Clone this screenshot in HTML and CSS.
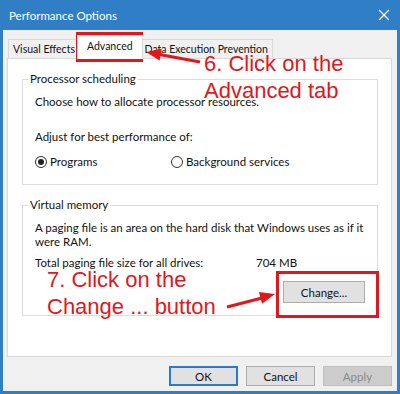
FILE: index.html
```html
<!DOCTYPE html>
<html lang="en">
<head>
    <meta charset="UTF-8">
    <title>Performance Options</title>
    <link rel="stylesheet" href="styles.css">
</head>
<body>
    <div class="window">
        <div class="titlebar">
            <span class="title">Performance Options</span>
            <svg class="close" width="12" height="12" viewBox="0 0 12 12">
                <path d="M1 1 L11 11 M11 1 L1 11" stroke="#fff" stroke-width="1.3" fill="none"/>
            </svg>
        </div>

        <div class="frame">
            <div class="tabs">
                <div class="tab">Visual Effects</div>
                <div class="tab selected">Advanced</div>
                <div class="tab">Data Execution Prevention</div>
            </div>

            <div class="panel">
                <fieldset class="group">
                    <legend>Processor scheduling</legend>
                    <p class="line">Choose how to allocate processor resources.</p>
                    <p class="line adjust">Adjust for best performance of:</p>
                    <div class="options">
                        <label class="option"><span class="radio checked"></span>Programs</label>
                        <label class="option"><span class="radio"></span>Background services</label>
                    </div>
                </fieldset>

                <fieldset class="group vm">
                    <legend>Virtual memory</legend>
                    <p class="para">A paging file is an area on the hard disk that Windows uses as if it were RAM.</p>
                    <div class="total">
                        <span class="total-label">Total paging file size for all drives:</span>
                        <span>704 MB</span>
                    </div>
                    <div class="change-row">
                        <button class="btn change">Change...</button>
                    </div>
                </fieldset>
            </div>

            <div class="footer">
                <button class="btn default">OK</button>
                <button class="btn">Cancel</button>
                <button class="btn disabled">Apply</button>
            </div>
        </div>

        <!-- tutorial annotations drawn over the dialog -->
        <div class="mark mark-tab"></div>
        <div class="mark mark-change"></div>
        <div class="note note-6">6. Click on the<br>Advanced tab</div>
        <div class="note note-7">7. Click on the<br>Change ... button</div>
        <svg class="arrows" width="400" height="394" viewBox="0 0 400 394">
            <line x1="200" y1="62" x2="158" y2="54.2" stroke="#e3161c" stroke-width="3"/>
            <polygon points="146,52 161.8,48.8 159.7,60.6" fill="#e3161c"/>
            <line x1="227" y1="307" x2="262" y2="298" stroke="#e3161c" stroke-width="3"/>
            <polygon points="275,294 262.1,303.7 258.9,292.1" fill="#e3161c"/>
        </svg>
    </div>
</body>
</html>
```

FILE: styles.css
```css
:root {
    --win-blue: #2f7ec6;
    --red: #e3161c;
}
body {
    margin: 0;
    font-family: Lato, 'Noto Sans', sans-serif;
    font-size: 11.5px;
    color: #111;
}
.window {
    position: relative;
    width: 400px;
    height: 394px;
    background: var(--win-blue);
    overflow: hidden;
}
.titlebar {
    height: 30px;
    display: flex;
    align-items: center;
    justify-content: space-between;
    padding: 0 10px 0 9px;
    box-sizing: border-box;
    color: white;
}
.title {
    font-size: 11.5px;
}
.frame {
    margin: 0 3px;
    height: 361px;
    background: #f0f0f0;
}
.tabs {
    height: 28px;
    display: flex;
    align-items: flex-end;
    padding-left: 6px;
    font-size: 10.5px;
}
.tab {
    height: 19px;
    line-height: 18px;
    padding: 0 4px;
    border: 1px solid #d9d9d9;
    border-bottom: none;
    box-sizing: border-box;
    background: #f0f0f0;
    margin-left: -1px;
}
.tab.selected {
    height: 24px;
    line-height: 20px;
    background: white;
    margin: 0 -2px -1px -3px;
    position: relative;
    z-index: 1;
    padding: 0 9px;
}
.panel {
    margin: 0 5px 0 4px;
    height: 299px;
    box-sizing: border-box;
    background: white;
    border: 1px solid #d9d9d9;
    padding-top: 12px;
}
.group {
    margin: 0 0 12px 14px;
    width: 356px;
    box-sizing: border-box;
    border: 1px solid #dcdcdc;
    padding: 7px 12px 14px 12px;
}
.group legend {
    line-height: 16px;
    padding: 0 2px;
    margin-left: -7px;
}
.line {
    margin: 0;
    line-height: 16px;
}
.adjust {
    margin-top: 19px;
}
.options {
    display: flex;
    margin-top: 9px;
    line-height: 16px;
}
.option {
    display: flex;
    align-items: center;
    width: 136px;
}
.option + .option {
    width: auto;
}
.radio {
    width: 12px;
    height: 12px;
    border: 1px solid #333;
    border-radius: 50%;
    box-sizing: border-box;
    margin-right: 3px;
    display: flex;
    align-items: center;
    justify-content: center;
}
.radio.checked::after {
    content: "";
    width: 6px;
    height: 6px;
    border-radius: 50%;
    background: #222;
}
.vm {
    padding-top: 8px;
    padding-bottom: 12px;
}
.para {
    margin: 0 -8px 0 0;
    line-height: 14px;
}
.total {
    display: flex;
    margin-top: 6px;
    line-height: 16px;
}
.total-label {
    width: 221px;
}
.change-row {
    display: flex;
    justify-content: flex-end;
    margin-top: 10px;
}
.btn {
    font-family: inherit;
    font-size: 11.5px;
    color: #111;
    background: #e1e1e1;
    border: 1px solid #adadad;
    height: 20px;
    width: 69px;
    padding: 0;
}
.change {
    width: 82px;
    height: 22px;
}
.footer {
    display: flex;
    justify-content: flex-end;
    gap: 8px;
    padding: 9px 5px 0 0;
}
.default {
    border: 2px solid #2a7ad1;
}
.disabled {
    background: #cccccc;
    border-color: #bfbfbf;
    color: #8a8a8a;
}
.mark {
    position: absolute;
    border: 3px solid var(--red);
    box-sizing: border-box;
}
.mark-tab {
    left: 76px;
    top: 32px;
    width: 67px;
    height: 30px;
}
.mark-change {
    left: 276px;
    top: 271px;
    width: 103px;
    height: 47px;
}
.note {
    position: absolute;
    font-family: 'Liberation Sans', Arial, sans-serif;
    font-size: 22px;
    line-height: 27px;
    color: var(--red);
}
.note-6 {
    left: 204px;
    top: 50px;
}
.note-7 {
    left: 47px;
    top: 266px;
}
.arrows {
    position: absolute;
    left: 0;
    top: 0;
    pointer-events: none;
}
```
